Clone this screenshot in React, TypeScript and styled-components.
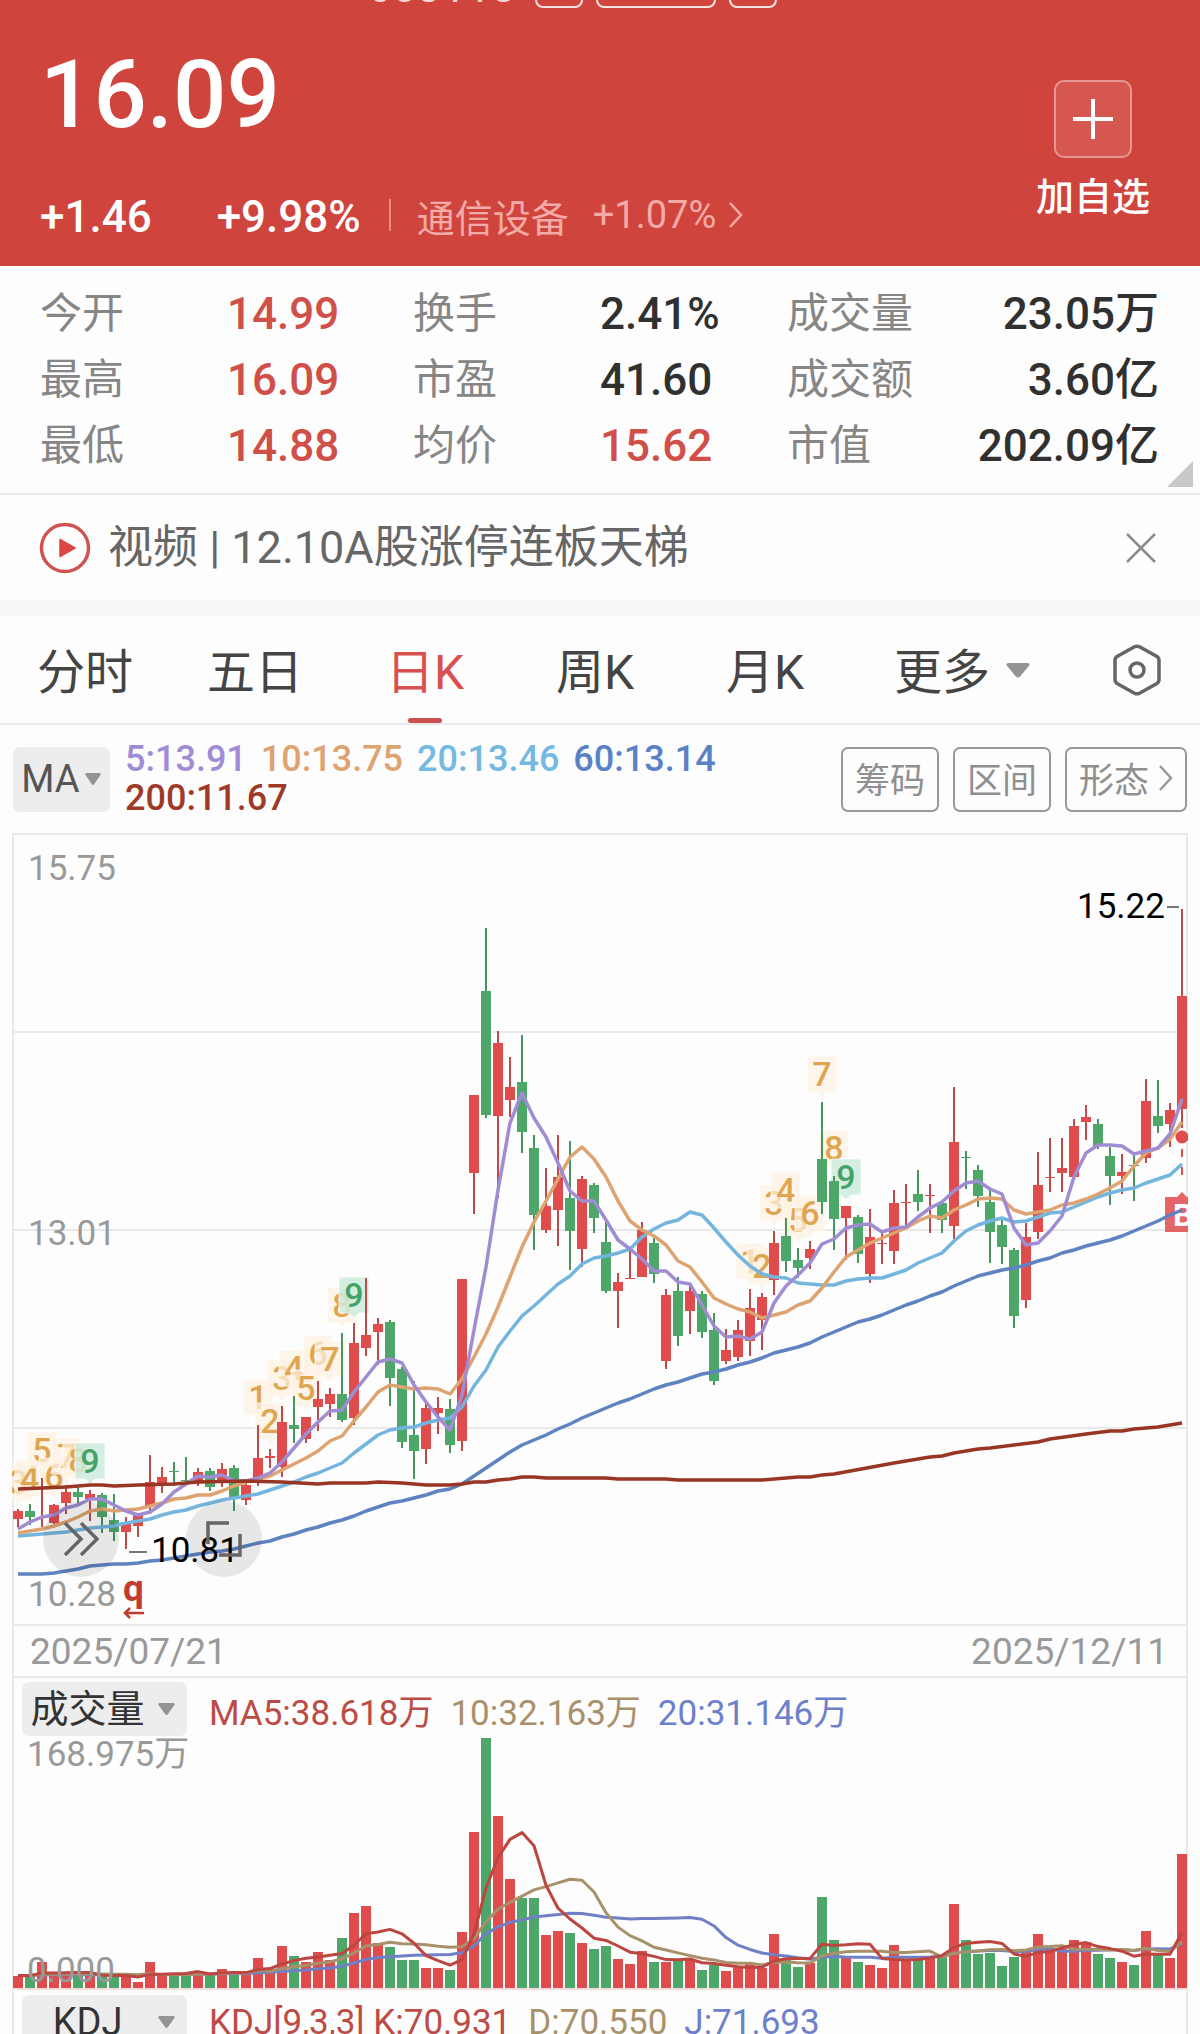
import React from "react";
import styled, { createGlobalStyle } from "styled-components";

const RED = "#e04b4c";
const GREEN = "#4da768";
const LINE = "#e9e9e9";

const Global = createGlobalStyle`
  *, *::before, *::after { box-sizing: border-box; }
  body {
    margin: 0;
    background: #fdfdfd;
    color: #333;
    font-family: Roboto, "Noto Sans CJK SC", sans-serif;
  }
  button, select { font: inherit; color: inherit; margin: 0; padding: 0; border: 0; background: none; cursor: pointer; }
  a { color: inherit; text-decoration: none; }
`;

const Screen = styled.main`
  height: 100vh;
  overflow: hidden;
`;

/* ---------- quote header ---------- */

const Header = styled.header`
  background: #cf453e;
  color: #fff;
`;

const CodeBar = styled.div`
  height: 8px;
  overflow: hidden;
  display: flex;
  justify-content: center;
  align-items: flex-end;
  gap: 13px;
  padding-right: 56px;
`;

const Code = styled.span`
  font-size: 44px;
  line-height: 40px;
  padding: 0 6px 1px 0;
  color: #f8d5d3;
`;

const Badge = styled.span<{ $wide?: boolean }>`
  width: ${(p) => (p.$wide ? 120 : 48)}px;
  height: 40px;
  border: 2px solid #fbe3e1;
  border-radius: 8px;
`;

const HeaderBody = styled.div`
  display: flex;
  justify-content: space-between;
  align-items: flex-start;
  height: 258px;
  padding: 0 50px 0 40px;
`;

const Price = styled.div`
  padding-top: 31px;
  font-size: 94px;
  line-height: 112px;
  font-weight: 500;
`;

const ChangeRow = styled.div`
  display: flex;
  align-items: center;
  margin-top: 30px;
  height: 72px;
  font-size: 44px;
  font-weight: 500;
  white-space: nowrap;
`;

const Percent = styled.span`
  margin-left: 65px;
`;

const Sector = styled.a`
  display: flex;
  align-items: center;
  gap: 24px;
  margin-left: 28px;
  padding: 0 0 4px 28px;
  position: relative;
  font-size: 38px;
  font-weight: 400;
  color: #f4aaa6;
  &::before {
    content: "";
    position: absolute;
    left: 0;
    height: 32px;
    width: 2px;
    background: #e58c87;
  }
  svg { margin-left: -12px; }
`;

const AddButton = styled.button`
  display: flex;
  flex-direction: column;
  align-items: center;
  margin-top: 72px;
  font-size: 38px;
  line-height: 54px;
  font-weight: 500;
`;

const AddBox = styled.span`
  display: flex;
  align-items: center;
  justify-content: center;
  width: 78px;
  height: 78px;
  margin-bottom: 12px;
  border: 2px solid #e79792;
  border-radius: 10px;
  background: #d5574f;
`;

/* ---------- key figures ---------- */

const Stats = styled.dl`
  position: relative;
  display: grid;
  grid-template-columns: 187fr 186fr 187fr 187fr 124fr 246fr;
  grid-auto-rows: 66px;
  align-items: center;
  margin: 0;
  padding: 15px 41px 14px 40px;
  border-bottom: 2px solid ${LINE};
  white-space: nowrap;
`;

const StatName = styled.dt`
  font-size: 42px;
  line-height: 66px;
  color: #868686;
`;

const StatValue = styled.dd<{ $up?: boolean; $end?: boolean }>`
  margin: 0;
  font-size: 44px;
  line-height: 66px;
  font-weight: 500;
  color: ${(p) => (p.$up ? "#d04f48" : "#303030")};
  text-align: ${(p) => (p.$end ? "right" : "left")};
`;

const Corner = styled.svg`
  position: absolute;
  right: 7px;
  bottom: 6px;
`;

/* ---------- video strip ---------- */

const News = styled.section`
  display: flex;
  align-items: center;
  height: 105px;
  padding: 0 43px 0 38px;
`;

const NewsLink = styled.a`
  flex: 1;
  display: flex;
  align-items: center;
  gap: 16px;
  font-size: 45px;
  line-height: 64px;
  color: #666;
  white-space: pre;
`;

const IconButton = styled.button`
  display: flex;
  align-items: center;
  justify-content: center;
`;

/* ---------- period tabs ---------- */

const Tabs = styled.nav`
  display: grid;
  grid-template-columns: repeat(5, 170fr) 224fr 126fr;
  height: 125px;
  border-top: 16px solid #f7f7f7;
  border-bottom: 2px solid ${LINE};
`;

const Tab = styled.button<{ $active?: boolean }>`
  position: relative;
  display: flex;
  align-items: center;
  justify-content: center;
  gap: 16px;
  padding-bottom: 4px;
  font-size: 48px;
  color: ${(p) => (p.$active ? "#d8504f" : "#444")};
  white-space: nowrap;
  svg { margin-top: 6px; }
  &::after {
    content: "";
    display: ${(p) => (p.$active ? "block" : "none")};
    position: absolute;
    bottom: 0;
    width: 34px;
    height: 5px;
    border-radius: 3px;
    background: #c9524f;
  }
`;

/* ---------- average legend and tools ---------- */

const Tools = styled.div`
  display: flex;
  align-items: center;
  height: 108px;
  padding: 0 13px;
`;

const Picker = styled.label<{ $wide?: boolean }>`
  position: relative;
  flex: none;
  display: flex;
  align-items: center;
  width: ${(p) => (p.$wide ? 165 : 97)}px;
  height: ${(p) => (p.$wide ? 54 : 65)}px;
  border-radius: 7px;
  background: #ededed;
  color: ${(p) => (p.$wide ? "#333" : "#555")};
  font-size: 38px;
  svg {
    position: absolute;
    right: ${(p) => (p.$wide ? 12 : 9)}px;
    pointer-events: none;
  }
  select {
    appearance: none;
    width: 100%;
    height: 100%;
    padding: ${(p) => (p.$wide ? "0 34px 0 0" : "0 22px 0 0")};
    text-align: center;
    text-align-last: center;
    outline: none;
  }
`;

const Averages = styled.div`
  flex: 1;
  display: flex;
  flex-wrap: wrap;
  column-gap: 14px;
  margin: 0 80px 0 15px;
  font-size: 36px;
  font-weight: 500;
  line-height: 39px;
`;

const Tone = styled.span<{ $color: string }>`
  color: ${(p) => p.$color};
  white-space: nowrap;
`;

const ToolButtons = styled.div`
  display: flex;
  gap: 14px;
`;

const ToolButton = styled.button`
  display: flex;
  align-items: center;
  gap: 9px;
  height: 65px;
  padding: 0 12px 3px;
  border: 2px solid #999;
  border-radius: 7px;
  font-size: 35px;
  color: #8f8f8f;
  white-space: nowrap;
`;

/* ---------- charts ---------- */

const Panel = styled.section`
  position: relative;
  margin: 0 12px;
`;

const Chart = styled.svg`
  display: block;
  width: 100%;
  height: auto;
  font-size: 35px;
`;

const Dates = styled.div`
  display: flex;
  justify-content: space-between;
  align-items: center;
  height: 52px;
  padding: 0 18px 0 16px;
  border: 2px solid ${LINE};
  border-top: 0;
  font-size: 37px;
  color: #999;
`;

const Legend = styled.div`
  display: flex;
  align-items: center;
  gap: 17px;
  height: 59px;
  padding: 3px 8px 0;
  border: 2px solid ${LINE};
  border-width: 0 2px;
  font-size: 35px;
  ${Picker} { margin-right: 5px; }
`;

const RoundButton = styled.button<{ $left: number }>`
  position: absolute;
  left: ${(p) => p.$left}px;
  bottom: 49px;
  display: flex;
  align-items: center;
  justify-content: center;
  width: 76px;
  height: 76px;
  border-radius: 50%;
  background: rgba(0, 0, 0, 0.085);
`;

const Caret = ({ w = 16, h = 12 }: { w?: number; h?: number }) => (
  <svg width={w} height={h} viewBox="0 0 16 12" preserveAspectRatio="none" aria-hidden="true">
    <path d="M1.5 0h13a1.3 1.3 0 0 1 1 2L9.300 11a1.600 1.600 0 0 1-2.600 0L.5 2a1.300 1.300 0 0 1 1-2z" fill="#949494" />
  </svg>
);

const Chevron = ({ color }: { color: string }) => (
  <svg width="15" height="26" viewBox="0 0 15 26" aria-hidden="true">
    <path d="M2 1l11 12L2 25" fill="none" stroke={color} strokeWidth="2.5" />
  </svg>
);

/* One candle per trading day: direction, high, body top, body bottom, low, volume. */
type Day = [0 | 1, number, number, number, number, number];
const DAYS: Day[] = [
  [1, 1509, 1511, 1519, 1527, 12], [0, 1504, 1511, 1517, 1525, 12], [1, 1478, 1517, 1518, 1527, 26],
  [1, 1504, 1505, 1523, 1524, 13], [1, 1485, 1492, 1503, 1514, 13], [0, 1487, 1492, 1497, 1504, 13],
  [1, 1490, 1494, 1499, 1521, 13], [0, 1493, 1495, 1517, 1533, 12], [0, 1494, 1520, 1532, 1541, 12],
  [1, 1517, 1522, 1532, 1549, 12], [1, 1513, 1514, 1526, 1537, 6], [1, 1455, 1482, 1506, 1514, 26],
  [1, 1467, 1477, 1483, 1493, 13], [0, 1462, 1471, 1472, 1486, 14], [0, 1457, 1480, 1481, 1482, 14],
  [1, 1468, 1472, 1481, 1486, 15], [0, 1468, 1471, 1487, 1491, 14], [1, 1463, 1469, 1483, 1487, 19],
  [0, 1465, 1468, 1499, 1511, 15], [1, 1483, 1485, 1500, 1505, 14], [1, 1425, 1458, 1481, 1486, 30],
  [1, 1449, 1456, 1458, 1468, 19], [1, 1406, 1422, 1467, 1477, 42], [0, 1396, 1425, 1429, 1443, 32],
  [1, 1417, 1417, 1439, 1443, 26], [1, 1381, 1399, 1407, 1431, 36], [1, 1388, 1394, 1404, 1417, 28],
  [0, 1333, 1394, 1420, 1422, 50], [1, 1323, 1343, 1418, 1425, 75], [1, 1278, 1335, 1348, 1356, 82],
  [1, 1318, 1324, 1332, 1365, 45], [0, 1320, 1322, 1378, 1406, 41], [0, 1367, 1369, 1442, 1448, 28],
  [0, 1381, 1435, 1451, 1479, 28], [1, 1403, 1408, 1449, 1464, 20], [1, 1397, 1408, 1413, 1434, 20],
  [0, 1399, 1409, 1445, 1453, 18], [1, 1279, 1279, 1441, 1451, 56], [1, 1095, 1095, 1173, 1214, 156],
  [0, 928, 991, 1115, 1118, 250], [1, 1031, 1043, 1116, 1198, 172], [1, 1057, 1087, 1100, 1117, 109],
  [0, 1035, 1082, 1132, 1153, 90], [0, 1135, 1148, 1215, 1250, 90], [1, 1168, 1206, 1230, 1233, 53],
  [1, 1135, 1177, 1210, 1246, 57], [0, 1141, 1198, 1231, 1270, 55], [1, 1176, 1179, 1249, 1267, 45],
  [0, 1183, 1185, 1218, 1233, 39], [0, 1220, 1242, 1291, 1293, 42], [1, 1273, 1282, 1291, 1328, 29],
  [1, 1248, 1278, 1279, 1279, 24], [1, 1222, 1230, 1277, 1277, 37], [0, 1238, 1243, 1274, 1283, 26],
  [1, 1289, 1295, 1361, 1369, 26], [0, 1277, 1291, 1336, 1346, 28], [1, 1284, 1291, 1311, 1334, 28],
  [0, 1291, 1294, 1332, 1338, 18], [0, 1313, 1330, 1381, 1385, 23], [1, 1329, 1350, 1361, 1364, 17],
  [1, 1320, 1330, 1357, 1361, 20], [1, 1289, 1308, 1341, 1356, 24], [1, 1293, 1297, 1320, 1350, 20],
  [1, 1231, 1243, 1280, 1295, 54], [0, 1218, 1236, 1261, 1272, 28], [0, 1248, 1260, 1268, 1278, 21],
  [1, 1241, 1249, 1258, 1269, 25], [0, 1102, 1159, 1202, 1214, 91], [0, 1176, 1181, 1219, 1250, 48],
  [1, 1206, 1206, 1218, 1260, 31], [0, 1215, 1217, 1254, 1263, 26], [1, 1209, 1237, 1274, 1283, 23],
  [1, 1233, 1243, 1244, 1264, 20], [1, 1190, 1203, 1251, 1264, 43], [1, 1184, 1202, 1203, 1227, 28],
  [0, 1170, 1194, 1202, 1211, 28], [1, 1184, 1195, 1196, 1233, 31], [0, 1202, 1203, 1220, 1233, 32],
  [1, 1087, 1142, 1226, 1239, 84], [0, 1151, 1157, 1158, 1189, 48], [0, 1165, 1170, 1196, 1207, 34],
  [0, 1188, 1202, 1232, 1263, 35], [0, 1220, 1225, 1247, 1264, 22], [0, 1248, 1250, 1316, 1328, 31],
  [1, 1223, 1237, 1300, 1308, 36], [1, 1152, 1185, 1232, 1239, 54], [1, 1138, 1177, 1178, 1192, 40],
  [1, 1138, 1168, 1173, 1192, 39], [1, 1119, 1126, 1177, 1178, 48], [1, 1105, 1117, 1122, 1140, 46],
  [0, 1119, 1124, 1146, 1149, 34], [0, 1147, 1156, 1176, 1205, 30], [1, 1154, 1172, 1176, 1194, 26],
  [0, 1154, 1165, 1166, 1201, 23], [1, 1079, 1101, 1158, 1163, 57], [0, 1080, 1116, 1126, 1133, 33],
  [1, 1103, 1110, 1124, 1147, 30], [1, 909, 996, 1109, 1128, 134],
];

const MA5 = [1529, 1522, 1517, 1515, 1508, 1505, 1499, 1499, 1505, 1511, 1515, 1512, 1504, 1492, 1484, 1476, 1477, 1475, 1481, 1481, 1478, 1473, 1462, 1448, 1434, 1422, 1411, 1410, 1392, 1377, 1362, 1359, 1363, 1385, 1402, 1417, 1430, 1395, 1330, 1267, 1190, 1123, 1093, 1118, 1137, 1163, 1191, 1201, 1201, 1220, 1240, 1249, 1259, 1271, 1271, 1282, 1284, 1305, 1326, 1337, 1336, 1339, 1332, 1303, 1286, 1275, 1263, 1244, 1239, 1228, 1225, 1224, 1232, 1228, 1227, 1217, 1208, 1202, 1191, 1183, 1181, 1189, 1194, 1228, 1245, 1243, 1231, 1216, 1177, 1153, 1145, 1145, 1146, 1154, 1151, 1148, 1134, 1099];
const MA10 = [1533, 1531, 1529, 1526, 1522, 1517, 1511, 1509, 1511, 1510, 1509, 1506, 1503, 1499, 1498, 1495, 1495, 1491, 1486, 1482, 1479, 1476, 1470, 1464, 1458, 1451, 1441, 1436, 1421, 1407, 1392, 1385, 1387, 1389, 1388, 1389, 1394, 1379, 1357, 1334, 1307, 1277, 1247, 1222, 1201, 1179, 1157, 1147, 1159, 1177, 1201, 1221, 1230, 1236, 1245, 1261, 1267, 1282, 1298, 1304, 1309, 1312, 1318, 1315, 1312, 1305, 1301, 1288, 1272, 1257, 1250, 1243, 1238, 1233, 1228, 1221, 1216, 1218, 1210, 1205, 1199, 1198, 1199, 1210, 1214, 1212, 1210, 1205, 1203, 1199, 1194, 1188, 1181, 1166, 1153, 1148, 1139, 1122];
const MA20 = [1536, 1535, 1534, 1533, 1532, 1530, 1528, 1527, 1526, 1523, 1521, 1519, 1515, 1512, 1510, 1506, 1503, 1500, 1498, 1496, 1494, 1490, 1486, 1482, 1477, 1473, 1468, 1463, 1453, 1444, 1435, 1430, 1428, 1427, 1423, 1420, 1418, 1407, 1386, 1370, 1347, 1331, 1316, 1306, 1295, 1284, 1276, 1264, 1258, 1256, 1253, 1249, 1237, 1229, 1223, 1220, 1212, 1215, 1228, 1242, 1255, 1266, 1274, 1277, 1278, 1283, 1284, 1285, 1285, 1281, 1279, 1278, 1278, 1274, 1270, 1263, 1258, 1253, 1241, 1231, 1225, 1221, 1218, 1222, 1221, 1217, 1213, 1212, 1207, 1202, 1197, 1193, 1190, 1188, 1183, 1179, 1175, 1164];
const MA60 = [1574, 1574, 1574, 1573, 1571, 1569, 1566, 1565, 1564, 1564, 1563, 1561, 1560, 1558, 1556, 1554, 1552, 1551, 1549, 1546, 1543, 1541, 1537, 1534, 1530, 1527, 1523, 1520, 1516, 1511, 1507, 1503, 1501, 1498, 1495, 1491, 1489, 1484, 1476, 1468, 1460, 1452, 1445, 1440, 1435, 1429, 1424, 1418, 1413, 1408, 1403, 1399, 1394, 1389, 1385, 1382, 1378, 1374, 1372, 1369, 1365, 1362, 1358, 1353, 1350, 1347, 1343, 1337, 1332, 1327, 1322, 1319, 1315, 1310, 1305, 1301, 1296, 1292, 1286, 1281, 1276, 1273, 1270, 1268, 1265, 1261, 1258, 1253, 1250, 1246, 1243, 1240, 1236, 1231, 1226, 1221, 1215, 1210];
/* The slow average barely moves, so only its turning days are kept: [day, y]. */
const MA200: [number, number][] = [[0, 1489], [2, 1488], [4, 1487], [6, 1485], [7, 1485], [8, 1486], [10, 1485], [13, 1484], [15, 1482], [19, 1481], [22, 1482], [25, 1484], [26, 1483], [29, 1483], [30, 1482], [32, 1483], [34, 1485], [36, 1485], [37, 1484], [38, 1482], [39, 1482], [40, 1480], [41, 1479], [42, 1477], [43, 1477], [44, 1478], [49, 1478], [50, 1479], [54, 1479], [55, 1480], [62, 1480], [65, 1477], [66, 1477], [67, 1475], [68, 1474], [73, 1463], [76, 1457], [77, 1456], [78, 1453], [80, 1449], [81, 1448], [85, 1442], [86, 1439], [89, 1434], [91, 1431], [92, 1431], [93, 1429], [95, 1427], [97, 1423]];

/* Sequence counters printed above candles: x, centre y, digit. */
const MARKS: [number, number, number][] = [
  [18, 1482, 3], [30, 1478, 4], [42, 1450, 5], [54, 1476, 6], [67, 1456, 7], [78, 1460, 8], [90, 1461, 9],
  [258, 1397, 1], [270, 1421, 2], [282, 1378, 3], [294, 1368, 4], [306, 1388, 5], [318, 1353, 6], [330, 1359, 7], [342, 1305, 8], [354, 1295, 9],
  [750, 1261, 1], [762, 1266, 2], [774, 1203, 3], [786, 1190, 4], [798, 1220, 5], [810, 1213, 6], [822, 1074, 7], [834, 1148, 8], [846, 1177, 9],
];

const dayX = (i: number) => 18 + i * 12;
const path = (pts: number[]) => pts.map((y, i) => `${dayX(i)},${y}`).join(" ");

const rolling = (n: number) => {
  const padded = [...Array(n - 1).fill(12.5), ...DAYS.map((d) => d[5])];
  return DAYS.map((_, i) => 1988 - padded.slice(i, i + n).reduce((a, b) => a + b, 0) / n);
};

const Mark = ({ x, y, n }: { x: number; y: number; n: number }) => {
  const done = n === 9;
  return (
    <g>
      <path
        d={`M${x - 15} ${y - 18}h30v36h-10l-5 5l-5 -5h-10z`}
        fill={done ? "#cdebdc" : "#fdf1e2"}
        fillOpacity={done ? 0.85 : 0.72}
        stroke="#fff"
        strokeOpacity="0.7"
      />
      <text x={x} y={y + 12} textAnchor="middle" fontSize="34" fontWeight="500" fill={done ? "#46a367" : "#dea650"}>{n}</text>
    </g>
  );
};

const PriceChart = () => (
  <Chart viewBox="12 833 1176 793" role="img" aria-label="日K">
    <rect x="13" y="834" width="1174" height="791" fill="none" stroke={LINE} strokeWidth="2" />
    <path d="M12 1032h1176M12 1230h1176M12 1428h1176" stroke={LINE} strokeWidth="2" />
    <g fill="#999">
      <text x="28" y="880">15.75</text>
      <text x="28" y="1245">13.01</text>
      <text x="28" y="1606">10.28</text>
    </g>
    {MARKS.map(([x, y, n]) => <Mark key={x} x={x} y={y} n={n} />)}
    {DAYS.map(([up, high, top, bottom, low], i) => (
      <g key={i} fill={up ? RED : GREEN}>
        <rect x={dayX(i) - 1} y={high} width="2" height={low - high} fill={up ? "#c04a4a" : "#48955f"} />
        <rect x={dayX(i) - 5} y={top} width="10" height={bottom - top} />
      </g>
    ))}
    <circle cx="1182" cy="1137" r="6.500" fill={RED} />
    <path d="M1182 1149v36" stroke={RED} strokeWidth="2" strokeDasharray="8 10" />
    <path d="M1165 1197h12l5-5l5 5h10v35h-32z" fill="#e04b4c" fillOpacity="0.85" />
    <text x="1173" y="1226" fontSize="32" fontWeight="700" fill="#fff">B</text>
    <g fill="none" strokeWidth="3.500" strokeLinejoin="round">
      <polyline points={path(MA60)} stroke="#5f83c0" />
      <polyline points={path(MA20)} stroke="#74b5de" />
      <polyline points={path(MA10)} stroke="#dda370" />
      <polyline points={path(MA5)} stroke="#a08cd2" />
      <polyline points={MA200.map(([i, y]) => `${dayX(i)},${y}`).join(" ")} stroke="#983525" />
    </g>
    <path d="M129 1552h18M1167 907h12" stroke="#777" strokeWidth="2" />
    <text x="151" y="1562" fill="#000">10.81</text>
    <text x="1077" y="918" fill="#000">15.22</text>
    <text x="123" y="1601" fontSize="37" fontWeight="700" fill="#c23a30">q</text>
    <path d="M144 1613h-19M130 1608l-5 5l5 5" stroke="#c23a30" strokeWidth="2.500" fill="none" />
  </Chart>
);

const VolumeChart = () => (
  <Chart viewBox="12 1737 1176 254" role="img" aria-label="成交量">
    <path d="M13 1737v253M1187 1737v253" stroke={LINE} strokeWidth="2" />
    <path d="M12 1989h1176" stroke="#f3dddb" strokeWidth="2" />
    {DAYS.map((d, i) => (
      <rect key={i} x={dayX(i) - 5} y={1988 - d[5]} width="10" height={d[5]} fill={d[0] ? RED : GREEN} />
    ))}
    <g fill="none" strokeWidth="3" strokeLinejoin="round">
      <polyline points={path(rolling(20))} stroke="#6f80c6" />
      <polyline points={path(rolling(10))} stroke="#a8916a" />
      <polyline points={path(rolling(5))} stroke="#bd4640" />
    </g>
    <g fill="#999">
      <text x="27" y="1766">168.975万</text>
      <text x="27" y="1982">0.000</text>
    </g>
  </Chart>
);

export default function App() {
  return (
    <Screen>
      <Global />
      <Header>
        <CodeBar>
          <Code>603118</Code>
          <Badge />
          <Badge $wide />
          <Badge />
        </CodeBar>
        <HeaderBody>
          <div>
            <Price>16.09</Price>
            <ChangeRow>
              <span>+1.46</span>
              <Percent>+9.98%</Percent>
              <Sector href="#sector">
                <span>通信设备</span>
                <span>+1.07%</span>
                <Chevron color="#f4aaa6" />
              </Sector>
            </ChangeRow>
          </div>
          <AddButton>
            <AddBox>
              <svg width="42" height="42" viewBox="0 0 42 42" aria-hidden="true">
                <path d="M21 1v40M1 21h40" stroke="#fff" strokeWidth="4" />
              </svg>
            </AddBox>
            加自选
          </AddButton>
        </HeaderBody>
      </Header>

      <Stats>
        <StatName>今开</StatName><StatValue $up>14.99</StatValue>
        <StatName>换手</StatName><StatValue>2.41%</StatValue>
        <StatName>成交量</StatName><StatValue $end>23.05万</StatValue>
        <StatName>最高</StatName><StatValue $up>16.09</StatValue>
        <StatName>市盈</StatName><StatValue>41.60</StatValue>
        <StatName>成交额</StatName><StatValue $end>3.60亿</StatValue>
        <StatName>最低</StatName><StatValue $up>14.88</StatValue>
        <StatName>均价</StatName><StatValue $up>15.62</StatValue>
        <StatName>市值</StatName><StatValue $end>202.09亿</StatValue>
        <Corner width="26" height="26" viewBox="0 0 26 26" aria-hidden="true">
          <path d="M26 0v26H0z" fill="#c9c9c9" />
        </Corner>
      </Stats>

      <News>
        <NewsLink href="#video">
          <svg width="54" height="54" viewBox="0 0 54 54" aria-hidden="true">
            <circle cx="27" cy="27" r="23.500" fill="none" stroke="#cf5350" strokeWidth="3.500" />
            <path d="M22 18.500l15 8.500l-15 8.500z" fill="#dc4644" stroke="#dc4644" strokeWidth="1.500" strokeLinejoin="round" />
          </svg>
          <span>视频 | 12.10A股涨停连板天梯</span>
        </NewsLink>
        <IconButton aria-label="关闭">
          <svg width="32" height="32" viewBox="0 0 32 32" aria-hidden="true">
            <path d="M2 2l28 28M30 2L2 30" stroke="#8c8c8c" strokeWidth="2.500" />
          </svg>
        </IconButton>
      </News>

      <Tabs>
        <Tab>分时</Tab>
        <Tab>五日</Tab>
        <Tab $active>日K</Tab>
        <Tab>周K</Tab>
        <Tab>月K</Tab>
        <Tab>更多<Caret w={24} h={15} /></Tab>
        <IconButton aria-label="设置">
          <svg width="50" height="52" viewBox="0 0 50 52" aria-hidden="true">
            <path d="M22.500 2.800q2.500-1.300 5 0L44.500 12.200q2.500 1.500 2.500 4V35.800q0 2.500-2.500 4L27.500 49.200q-2.500 1.300-5 0L5.500 39.800Q3 38.300 3 35.800V16.200q0-2.500 2.500-4z" fill="none" stroke="#666" strokeWidth="3.500" />
            <circle cx="25" cy="26" r="7" fill="none" stroke="#666" strokeWidth="3.500" />
          </svg>
        </IconButton>
      </Tabs>

      <Tools>
        <Picker>
          <select aria-label="主图指标" defaultValue="MA"><option>MA</option></select>
          <Caret />
        </Picker>
        <Averages>
          <Tone $color="#a08cd6">5:13.91</Tone>
          <Tone $color="#dda370">10:13.75</Tone>
          <Tone $color="#74b9e2">20:13.46</Tone>
          <Tone $color="#5a80c6">60:13.14</Tone>
          <Tone $color="#a03a28">200:11.67</Tone>
        </Averages>
        <ToolButtons>
          <ToolButton>筹码</ToolButton>
          <ToolButton>区间</ToolButton>
          <ToolButton>形态<Chevron color="#999" /></ToolButton>
        </ToolButtons>
      </Tools>

      <Panel>
        <PriceChart />
        <RoundButton $left={31} aria-label="快进">
          <svg width="36" height="34" viewBox="0 0 36 34" aria-hidden="true">
            <path d="M2 1l16 16L2 33M18 1l16 16L18 33" fill="none" stroke="#666" strokeWidth="3.500" />
          </svg>
        </RoundButton>
        <RoundButton $left={174} aria-label="全屏">
          <svg width="36" height="36" viewBox="0 0 36 36" aria-hidden="true">
            <path d="M2 23V2h21M34 13v21H13" fill="none" stroke="#666" strokeWidth="3.500" />
          </svg>
        </RoundButton>
      </Panel>

      <Panel>
        <Dates>
          <time>2025/07/21</time>
          <time>2025/12/11</time>
        </Dates>
        <Legend>
          <Picker $wide>
            <select aria-label="副图一指标" defaultValue="成交量"><option>成交量</option></select>
            <Caret w={17} />
          </Picker>
          <Tone $color="#bc4b45">MA5:38.618万</Tone>
          <Tone $color="#a8916a">10:32.163万</Tone>
          <Tone $color="#6c80cb">20:31.146万</Tone>
        </Legend>
        <VolumeChart />
        <Legend>
          <Picker $wide>
            <select aria-label="副图二指标" defaultValue="KDJ"><option>KDJ</option></select>
            <Caret w={17} />
          </Picker>
          <Tone $color="#bc4b45">KDJ[9,3,3] K:70.931</Tone>
          <Tone $color="#a8916a">D:70.550</Tone>
          <Tone $color="#6c80cb">J:71.693</Tone>
        </Legend>
      </Panel>
    </Screen>
  );
}
